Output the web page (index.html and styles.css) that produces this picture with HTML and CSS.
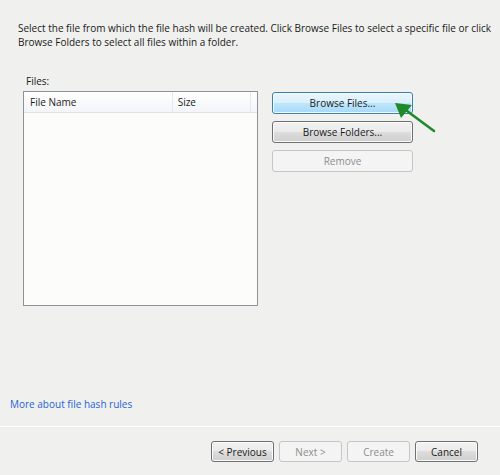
FILE: index.html
```html
<!DOCTYPE html>
<html>
<head>
<meta charset="utf-8">
<link rel="stylesheet" href="styles.css">
</head>
<body>
<div class="page">
  <p class="intro">Select the file from which the file hash will be created. Click Browse Files to select a specific file or click Browse Folders to select all files within a folder.</p>
  <div class="files-label">Files:</div>
  <div class="main">
    <div class="listbox">
      <div class="list-header">
        <div class="col col-name">File Name</div>
        <div class="col col-size">Size</div>
        <div class="col col-rest"></div>
      </div>
    </div>
    <div class="side-buttons">
      <button class="btn btn-hot">Browse Files...</button>
      <button class="btn">Browse Folders...</button>
      <button class="btn btn-disabled">Remove</button>
    </div>
  </div>
  <a class="help-link" href="#">More about file hash rules</a>
  <div class="footer">
    <button class="btn btn-small">&lt; Previous</button>
    <button class="btn btn-small btn-disabled">Next &gt;</button>
    <button class="btn btn-small btn-disabled">Create</button>
    <button class="btn btn-small">Cancel</button>
  </div>
  <svg class="arrow" width="60" height="50" viewBox="0 0 60 50">
    <line x1="44" y1="37" x2="17" y2="17" stroke="#1f8a2a" stroke-width="2.6" stroke-linecap="round"/>
    <polygon points="5,9 22,11 11,24" fill="#1f8a2a"/>
  </svg>
</div>
</body>
</html>
```
FILE: styles.css
```css
html, body {
  margin: 0;
  padding: 0;
}
body {
  font-family: "Open Sans", "Noto Sans", sans-serif;
  font-size: 10px;
  color: #1a1a1a;
  background: #f0f0ee;
}
.page {
  position: relative;
  width: 500px;
  height: 475px;
  background: #f0f0ee;
  display: flex;
  flex-direction: column;
  overflow: hidden;
}
.intro {
  margin: 21px 8px 0 18px;
  line-height: 14px;
}
.files-label {
  margin: 25px 0 0 26px;
  line-height: 14px;
}
.main {
  display: flex;
  margin-top: 3px;
  padding-left: 23px;
}
.listbox {
  width: 233px;
  height: 213px;
  border: 1px solid #8e9298;
  background: #fcfcfb;
}
.list-header {
  display: flex;
  height: 20px;
  border-bottom: 1px solid #dfe3e8;
  background: linear-gradient(#ffffff, #f3f5f8);
}
.col {
  line-height: 20px;
  padding-left: 6px;
  box-sizing: border-box;
  border-right: 1px solid #e6e8eb;
}
.col-name { width: 150px; }
.col-size { width: 79px; padding-left: 5px; }
.col-rest { flex: 1; border-right: none; }
.side-buttons {
  display: flex;
  flex-direction: column;
  gap: 7px;
  margin-left: 14px;
  margin-top: 1px;
}
.btn {
  font-family: inherit;
  font-size: 10px;
  color: #1a1a1a;
  width: 141px;
  height: 22px;
  padding: 0;
  border: 1px solid #707070;
  border-radius: 3px;
  background: linear-gradient(#f2f2f2 0%, #ebebeb 48%, #dddddd 50%, #cfcfcf 100%);
  box-shadow: inset 0 0 0 1px #fbfbfb;
}
.btn-hot {
  border-color: #3c7fb1;
  background: linear-gradient(#eaf6fd 0%, #d9f0fc 48%, #bee6fd 50%, #a7d9f5 100%);
  box-shadow: inset 0 0 0 1px #f4fbff;
}
.btn-disabled {
  color: #8d8d8d;
  border-color: #c3c5c7;
  background: #f4f4f4;
  box-shadow: none;
}
.help-link {
  margin: 91px 0 0 10px;
  line-height: 14px;
  color: #1f64d6;
  text-decoration: none;
  align-self: flex-start;
}
.footer {
  margin-top: 15px;
  border-top: 1px solid #fdfdfd;
  display: flex;
  justify-content: flex-end;
  gap: 5px;
  padding: 14px 22px 0 0;
}
.btn-small {
  width: 63px;
  height: 21px;
}
.arrow {
  position: absolute;
  left: 390px;
  top: 94px;
}
```
